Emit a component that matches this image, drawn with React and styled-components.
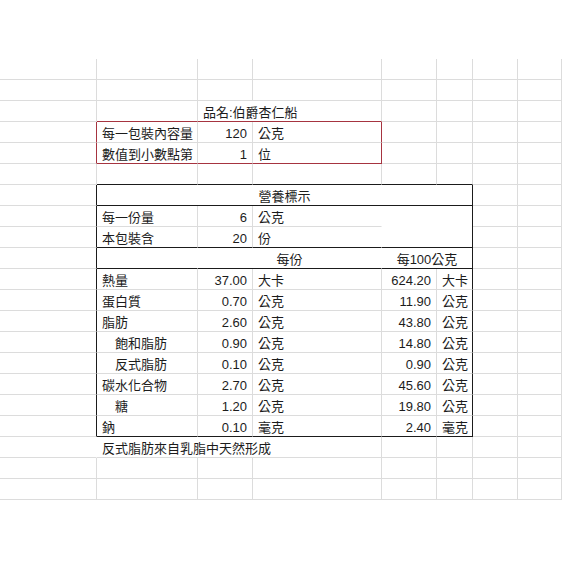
import React from 'react';
import styled, { createGlobalStyle } from 'styled-components';

const GlobalStyle = createGlobalStyle`
  html, body {
    margin: 0;
    background: #fff;
  }
  body {
    font-family: "Liberation Sans", "Noto Sans CJK TC", sans-serif;
  }
`;

const lines = {
  grid: '#dcdcdc',
  black: '#1b1b1b',
  red: '#a63440',
  none: 'transparent',
};

const justify = { left: 'flex-start', right: 'flex-end', center: 'center' };

const Page = styled.div`
  width: 562px;
  height: 562px;
  padding-top: 59px;
  box-sizing: border-box;
  overflow: hidden;
`;

const Sheet = styled.div`
  display: grid;
  grid-template-columns: 97px 101px 55px 129px 55px 36px 45px 1fr;
  grid-auto-rows: 21px;
`;

const Cell = styled.div`
  grid-column: ${p => p.$col + 1} / span ${p => p.$span};
  grid-row: ${p => p.$row + 1} / span ${p => p.$rows};
  box-sizing: border-box;
  display: flex;
  align-items: center;
  justify-content: ${p => justify[p.$align]};
  padding: 2px 5px 0 ${p => 5 + p.$indent}px;
  border-right: 1px solid ${p => lines[p.$right]};
  border-bottom: 1px solid ${p => lines[p.$bottom]};
  font-size: 13px;
  line-height: 17px;
  color: #1c1c1c;
  white-space: nowrap;
`;

const nutrients = [
  ['熱量', '37.00', '大卡', '624.20', '大卡'],
  ['蛋白質', '0.70', '公克', '11.90', '公克'],
  ['脂肪', '2.60', '公克', '43.80', '公克'],
  ['飽和脂肪', '0.90', '公克', '14.80', '公克', true],
  ['反式脂肪', '0.10', '公克', '0.90', '公克', true],
  ['碳水化合物', '2.70', '公克', '45.60', '公克'],
  ['糖', '1.20', '公克', '19.80', '公克', true],
  ['鈉', '0.10', '毫克', '2.40', '毫克'],
];

const content = {
  2: [{ col: 2, span: 2, text: '品名:伯爵杏仁船' }],
  3: [
    { col: 1, text: '每一包裝內容量' },
    { col: 2, text: '120', align: 'right' },
    { col: 3, text: '公克' },
  ],
  4: [
    { col: 1, text: '數值到小數點第' },
    { col: 2, text: '1', align: 'right' },
    { col: 3, text: '位' },
  ],
  6: [{ col: 1, span: 5, text: '營養標示', align: 'center' }],
  7: [
    { col: 1, text: '每一份量' },
    { col: 2, text: '6', align: 'right' },
    { col: 3, text: '公克' },
    { col: 4, span: 2, rows: 2 },
  ],
  8: [
    { col: 1, text: '本包裝含' },
    { col: 2, text: '20', align: 'right' },
    { col: 3, text: '份' },
  ],
  9: [
    { col: 2, span: 2, text: '每份', align: 'center' },
    { col: 4, span: 2, text: '每100公克', align: 'center' },
  ],
  18: [{ col: 1, span: 3, text: '反式脂肪來自乳脂中天然形成' }],
};

nutrients.forEach(([name, a, ua, b, ub, sub], i) => {
  content[10 + i] = [
    { col: 1, text: name, indent: sub ? 13 : 0 },
    { col: 2, text: a, align: 'right' },
    { col: 3, text: ua },
    { col: 4, text: b, align: 'right' },
    { col: 5, text: ub },
  ];
});

const ROWS = 21;
const COLS = 8;

const rightLine = (r, c) => {
  if ((c === 0 || c === 3) && r >= 3 && r <= 4) return 'red';
  if ((c === 0 || c === 5) && r >= 6 && r <= 17) return 'black';
  if (c === 0 && r === 18) return 'none';
  if ((r === 7 || r === 8) && c === 3) return 'none';
  if (r === 9 && c >= 1 && c <= 3) return 'none';
  return 'grid';
};

const bottomLine = (r, c) => {
  if ((r === 2 || r === 4) && c >= 1 && c <= 3) return 'red';
  if ([5, 6, 8, 9, 17].includes(r) && c >= 1 && c <= 5) return 'black';
  return 'grid';
};

const buildCells = () => {
  const taken = new Set();
  const cells = [];
  for (let r = 0; r < ROWS; r++) {
    const defs = content[r] || [];
    for (let c = 0; c < COLS; c++) {
      if (taken.has(`${r}-${c}`)) continue;
      const def = defs.find(d => d.col === c) || { col: c };
      const span = def.span || 1;
      const rows = def.rows || 1;
      for (let dr = 0; dr < rows; dr++) {
        for (let dc = 0; dc < span; dc++) taken.add(`${r + dr}-${c + dc}`);
      }
      cells.push({
        key: `${r}-${c}`,
        row: r,
        col: c,
        span,
        rows,
        text: def.text || '',
        align: def.align || 'left',
        indent: def.indent || 0,
        right: rightLine(r, c + span - 1),
        bottom: bottomLine(r + rows - 1, c),
      });
    }
  }
  return cells;
};

const cells = buildCells();

export default function App() {
  return (
    <Page>
      <GlobalStyle />
      <Sheet>
        {cells.map(cell => (
          <Cell
            key={cell.key}
            $row={cell.row}
            $col={cell.col}
            $span={cell.span}
            $rows={cell.rows}
            $align={cell.align}
            $indent={cell.indent}
            $right={cell.right}
            $bottom={cell.bottom}
          >
            {cell.text}
          </Cell>
        ))}
      </Sheet>
    </Page>
  );
}
